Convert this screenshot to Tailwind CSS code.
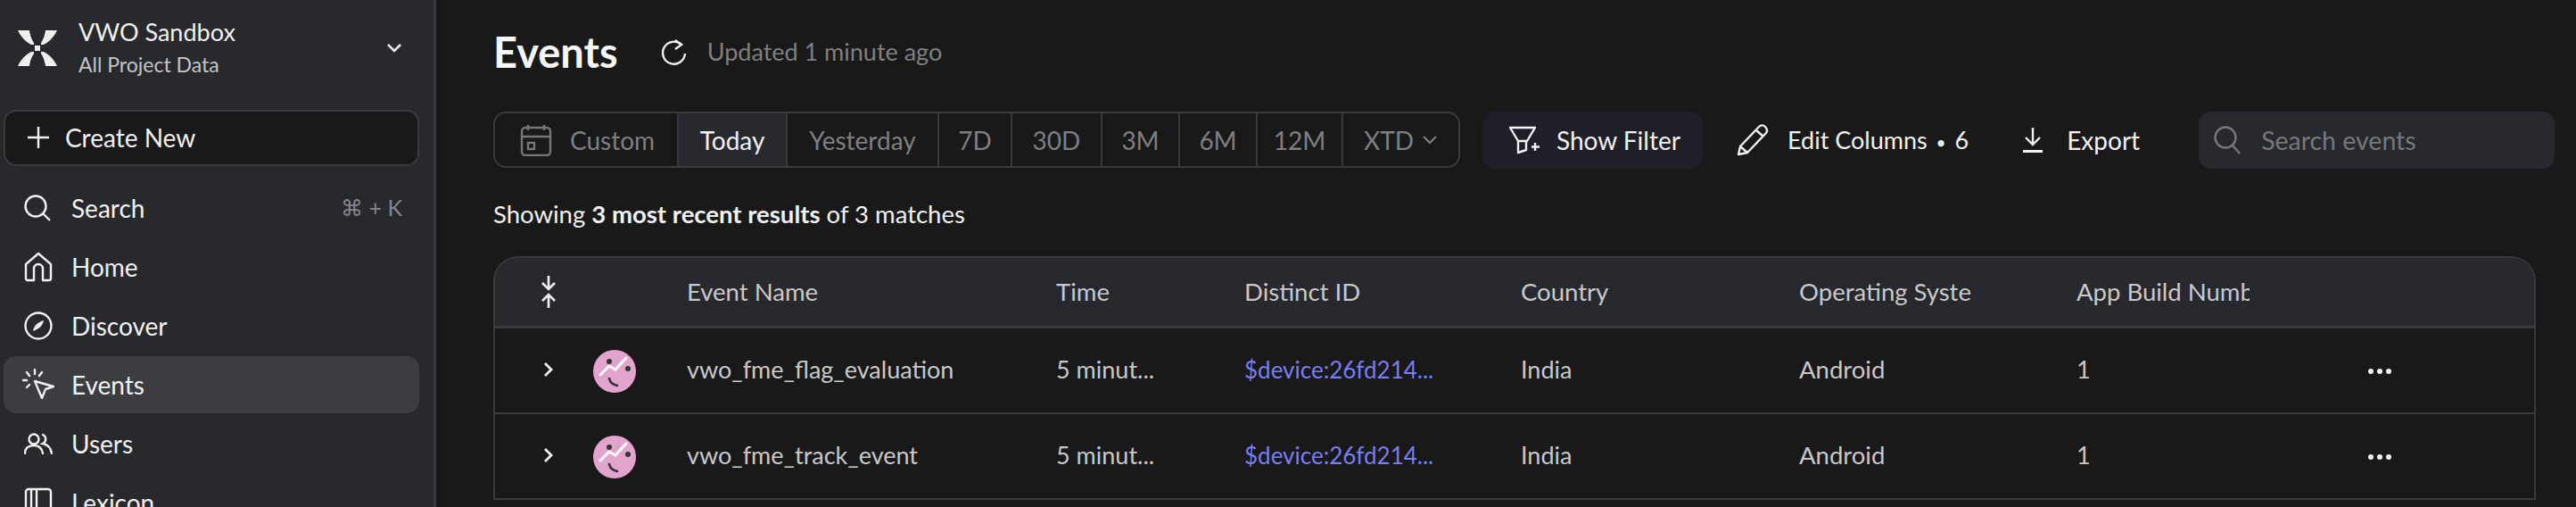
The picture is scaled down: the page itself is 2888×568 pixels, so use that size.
<!DOCTYPE html>
<html lang="en">
<head>
<meta charset="UTF-8">
<title>Events</title>
<script src="https://cdn.jsdelivr.net/npm/@tailwindcss/browser@4"></script>
</head>
<body class="bg-[#19191a] overflow-hidden">
<div class="flex h-[568px] w-[2888px] overflow-hidden font-['Lato',sans-serif] text-[28px] text-[#f2f2f2]">

  <!-- sidebar -->
  <aside class="w-[489px] shrink-0 bg-[#28292d] border-r-[3px] border-[#37383c] pl-[4px] pr-[16px]">
    <div class="flex items-center h-[123px] pl-[16px] pr-[19px] pb-[15px]">
      <svg class="w-[44px] h-[42px] shrink-0" viewBox="0 0 44 42" fill="#f0f0f0">
        <path d="M0 1H13C14 8 16 12 18 15V17H15C9 14 3 8 0 1Z"/><path d="M44 1H31C30 8 28 12 26 15V17H29C35 14 41 8 44 1Z"/>
        <path d="M0 41H13C14 34 16 30 18 27V25H15C9 28 3 34 0 41Z"/><path d="M44 41H31C30 34 28 30 26 27V25H29C35 28 41 34 44 41Z"/>
        <rect x="19" y="18" width="6" height="6"/>
      </svg>
      <div class="ml-[24px] flex-1">
        <div class="text-[27px] leading-[36px]">VWO Sandbox</div>
        <div class="text-[23px] leading-[37px] text-[#c4c4c6]">All Project Data</div>
      </div>
      <svg class="w-[18px] h-[12px]" viewBox="0 0 18 12" fill="none" stroke="#f2f2f2" stroke-width="2.6"><path d="M2 2l7 7 7-7"/></svg>
    </div>
    <div class="flex items-center h-[63px] rounded-[14px] bg-[#19191a] border-[2px] border-[#3a3b3f] pl-[25px] pb-[2px]">
      <svg class="w-[24px] h-[24px]" viewBox="0 0 24 24" stroke="#f2f2f2" stroke-width="2.4"><path d="M12 0v24M0 12h24"/></svg>
      <span class="ml-[18px]">Create New</span>
    </div>
    <nav class="mt-[14px]">
      <div class="flex items-center h-[66px] pl-[23px] pr-[19px]">
        <svg class="w-[30px] h-[30px] shrink-0" viewBox="0 0 30 30" fill="none" stroke="#f2f2f2" stroke-width="2.4"><circle cx="13" cy="13" r="11.5"/><path d="M21 21l8 8"/></svg>
        <span class="ml-[23px] flex-1">Search</span>
        <span class="text-[#858587] text-[25px]">⌘ + K</span>
      </div>
      <div class="flex items-center h-[66px] pl-[23px]">
        <svg class="w-[32px] h-[34px] shrink-0" viewBox="0 0 32 34" fill="none" stroke="#f2f2f2" stroke-width="2.4" stroke-linejoin="round"><path d="M2 14L16 2l14 12v16a2 2 0 0 1-2 2h-7V19a5 5 0 0 0-10 0v13H4a2 2 0 0 1-2-2Z"/></svg>
        <span class="ml-[21px]">Home</span>
      </div>
      <div class="flex items-center h-[66px] pl-[23px]">
        <svg class="w-[32px] h-[32px] shrink-0" viewBox="0 0 32 32" fill="none" stroke="#f2f2f2" stroke-width="2.4"><circle cx="16" cy="16" r="14.5"/><path d="M22 10c-1 5-4 9-12 12 1-6 5-10 12-12Z" fill="#f2f2f2" stroke="none"/></svg>
        <span class="ml-[21px]">Discover</span>
      </div>
      <div class="flex items-center h-[64px] my-[1px] pl-[21px] bg-[#3c3d40] rounded-[14px]">
        <svg class="w-[36px] h-[36px] shrink-0" viewBox="0 0 36 36" fill="none" stroke="#f2f2f2" stroke-width="2.4" stroke-linecap="round" stroke-linejoin="round"><path d="M14 14l21 6-9 3-4 10Z"/><path d="M14 1v5M5 4l3 4M22 4l-3 4M1 13h4M5 21l3-3"/></svg>
        <span class="ml-[19px]">Events</span>
      </div>
      <div class="flex items-center h-[66px] pl-[23px]">
        <svg class="w-[32px] h-[24px] shrink-0" viewBox="0 0 32 24" fill="none" stroke="#f2f2f2" stroke-width="2.4" stroke-linecap="round"><circle cx="11" cy="7" r="5.5"/><path d="M1 23c0-6 4-9 10-9s9 3 10 9M21 2a5.5 5.5 0 0 1 0 10c5 1 9 5 10 11"/></svg>
        <span class="ml-[21px]">Users</span>
      </div>
      <div class="flex items-center h-[66px] pl-[23px]">
        <svg class="w-[32px] h-[34px] shrink-0" viewBox="0 0 32 34" fill="none" stroke="#f2f2f2" stroke-width="2.4"><rect x="2" y="2" width="28" height="30" rx="3"/><path d="M8 2v30M14 2v30"/></svg>
        <span class="ml-[21px]">Lexicon</span>
      </div>
    </nav>
  </aside>

  <!-- main -->
  <main class="flex-1 min-w-0 pl-[64px]">
    <div class="flex items-center h-[125px] pb-[8px]">
      <h1 class="text-[47px] font-bold text-[#f7f7f7]">Events</h1>
      <svg class="ml-[49px] w-[28px] h-[30px]" viewBox="0 0 28 30" fill="none" stroke="#f2f2f2" stroke-width="2.4"><path d="M22 6a12.5 12.5 0 1 0 4 10"/><path d="M15 1l7 5-7 5"/></svg>
      <span class="ml-[23px] text-[27px] text-[#7f7f81]">Updated 1 minute ago</span>
    </div>

    <div class="flex items-start h-[64px]">
      <div class="flex h-[63px] w-[1084px] rounded-[14px] border-[2px] border-[#3a3a3c] text-[#7f7f81]">
        <div class="w-[206px] flex items-center pl-[28px] border-r-[2px] border-[#3a3a3c]">
          <svg class="w-[36px] h-[36px] shrink-0" viewBox="0 0 36 36" fill="none" stroke="#77777a" stroke-width="2.4"><rect x="2" y="4" width="32" height="31" rx="4"/><path d="M2 14h32M9 1v6M27 1v6"/><rect x="9" y="21" width="7" height="7"/></svg>
          <span class="ml-[20px]">Custom</span>
        </div>
        <div class="w-[122px] flex items-center justify-center bg-[#28292e] text-[#f2f2f2] border-r-[2px] border-[#3a3a3c]">Today</div>
        <div class="w-[170px] flex items-center justify-center border-r-[2px] border-[#3a3a3c]">Yesterday</div>
        <div class="w-[82px] flex items-center justify-center border-r-[2px] border-[#3a3a3c]">7D</div>
        <div class="w-[101px] flex items-center justify-center border-r-[2px] border-[#3a3a3c]">30D</div>
        <div class="w-[87px] flex items-center justify-center border-r-[2px] border-[#3a3a3c]">3M</div>
        <div class="w-[87px] flex items-center justify-center border-r-[2px] border-[#3a3a3c]">6M</div>
        <div class="w-[96px] flex items-center justify-center border-r-[2px] border-[#3a3a3c]">12M</div>
        <div class="flex-1 flex items-center pl-[23px]">XTD
          <svg class="ml-[10px] w-[16px] h-[10px]" viewBox="0 0 16 10" fill="none" stroke="#7f7f81" stroke-width="2.2"><path d="M1 1l7 7 7-7"/></svg>
        </div>
      </div>
      <div class="ml-[25px] flex items-center h-[64px] w-[247px] rounded-[14px] bg-[#1e1f28] pl-[29px]">
        <svg class="w-[36px] h-[32px] shrink-0" viewBox="0 0 36 32" fill="none" stroke="#f2f2f2" stroke-width="2.4" stroke-linejoin="round"><path d="M2 2h28l-9 15H11Z"/><path d="M11 17v13l9-3V17M30 19v9M26 23.5h9"/></svg>
        <span class="ml-[18px]">Show Filter</span>
      </div>
      <div class="ml-[38px] flex items-center h-[64px]">
        <svg class="w-[36px] h-[36px] shrink-0" viewBox="0 0 36 36" fill="none" stroke="#f2f2f2" stroke-width="2.4" stroke-linejoin="round"><path d="M2 34l2-9L25 3c2-2 5-2 7 0s3 5 1 7L12 32ZM22 7l8 7M4 25l8 7"/></svg>
        <span class="ml-[21px] text-[27px]">Edit Columns <span class="text-[19px] mx-[3px]">•</span> 6</span>
      </div>
      <div class="ml-[61px] flex items-center h-[64px]">
        <svg class="w-[22px] h-[28px] shrink-0" viewBox="0 0 22 28" fill="none" stroke="#f2f2f2" stroke-width="2.4"><path d="M11 0v19M3 11l8 8 8-8"/><path d="M0 26.5h22" stroke-width="3"/></svg>
        <span class="ml-[27px]">Export</span>
      </div>
      <div class="ml-[66px] flex items-center h-[64px] w-[399px] rounded-[14px] bg-[#28292e] pl-[17px]">
        <svg class="w-[30px] h-[32px] shrink-0" viewBox="0 0 30 32" fill="none" stroke="#77777a" stroke-width="2.4"><circle cx="13" cy="13" r="11.5"/><path d="M21 22l8 9"/></svg>
        <span class="ml-[23px] text-[28.5px] text-[#77777a]">Search events</span>
      </div>
    </div>

    <div class="h-[98px] flex items-center pt-[3px] text-[27.5px]">
      <span>Showing <b class="font-bold">3 most recent results</b> of 3 matches</span>
    </div>

    <!-- table -->
    <div class="w-[2290px] rounded-t-[28px] border-x-[2px] border-t-[2px] border-[#3a3a3c] text-[#c8c8ca] text-[27px]">
      <div class="flex items-center h-[79px] rounded-t-[26px] bg-[#28292e] border-b-[3px] border-[#3a3a3c] text-[27.5px]">
        <div class="w-[215px] pl-[51px]">
          <svg class="w-[18px] h-[36px]" viewBox="0 0 18 36" fill="none" stroke="#f2f2f2" stroke-width="2.6"><path d="M9 0v14M2 8l7 7 7-7M9 36V22M2 28l7-7 7 7"/></svg>
        </div>
        <div class="w-[414px]">Event Name</div>
        <div class="w-[211px]">Time</div>
        <div class="w-[310px]">Distinct ID</div>
        <div class="w-[312px]">Country</div>
        <div class="w-[311px]"><div class="w-[193px] overflow-hidden whitespace-nowrap">Operating System</div></div>
        <div><div class="w-[194px] overflow-hidden whitespace-nowrap">App Build Number</div></div>
      </div>

      <div class="flex items-center h-[96px] pb-[2px] border-b-[2px] border-[#3a3a3c]">
        <div class="w-[215px] flex items-center pl-[54px]">
          <svg class="w-[11px] h-[18px]" viewBox="0 0 11 18" fill="none" stroke="#f2f2f2" stroke-width="2.8"><path d="M2 2l7 7-7 7"/></svg>
          <svg class="ml-[45px] w-[48px] h-[48px] mt-[4px]" viewBox="0 0 48 48"><circle cx="24" cy="24" r="24" fill="#e2a3cc"/><circle cx="18" cy="13" r="3" fill="#333"/><circle cx="39" cy="21" r="3" fill="#333"/><path d="M8 28l10-10 7 4 12-13" fill="none" stroke="#fff" stroke-width="3" stroke-linecap="round"/><path d="M18 32c1 5 4 7 9 8" fill="none" stroke="#333" stroke-width="2.6" stroke-linecap="round"/></svg>
        </div>
        <div class="w-[414px]">vwo_fme_flag_evaluation</div>
        <div class="w-[211px]">5 minut...</div>
        <div class="w-[310px] text-[26px] text-[#7a7df0]">$device:26fd214...</div>
        <div class="w-[312px]">India</div>
        <div class="w-[311px] text-[27.5px]">Android</div>
        <div class="w-[327px]">1</div>
        <svg class="w-[26px] h-[6px] mt-[3px]" viewBox="0 0 26 6" fill="#f2f2f2"><circle cx="3" cy="3" r="3"/><circle cx="13" cy="3" r="3"/><circle cx="23" cy="3" r="3"/></svg>
      </div>

      <div class="flex items-center h-[96px] pb-[2px] border-b-[2px] border-[#3a3a3c]">
        <div class="w-[215px] flex items-center pl-[54px]">
          <svg class="w-[11px] h-[18px]" viewBox="0 0 11 18" fill="none" stroke="#f2f2f2" stroke-width="2.8"><path d="M2 2l7 7-7 7"/></svg>
          <svg class="ml-[45px] w-[48px] h-[48px] mt-[4px]" viewBox="0 0 48 48"><circle cx="24" cy="24" r="24" fill="#e2a3cc"/><circle cx="18" cy="13" r="3" fill="#333"/><circle cx="39" cy="21" r="3" fill="#333"/><path d="M8 28l10-10 7 4 12-13" fill="none" stroke="#fff" stroke-width="3" stroke-linecap="round"/><path d="M18 32c1 5 4 7 9 8" fill="none" stroke="#333" stroke-width="2.6" stroke-linecap="round"/></svg>
        </div>
        <div class="w-[414px]">vwo_fme_track_event</div>
        <div class="w-[211px]">5 minut...</div>
        <div class="w-[310px] text-[26px] text-[#7a7df0]">$device:26fd214...</div>
        <div class="w-[312px]">India</div>
        <div class="w-[311px] text-[27.5px]">Android</div>
        <div class="w-[327px]">1</div>
        <svg class="w-[26px] h-[6px] mt-[3px]" viewBox="0 0 26 6" fill="#f2f2f2"><circle cx="3" cy="3" r="3"/><circle cx="13" cy="3" r="3"/><circle cx="23" cy="3" r="3"/></svg>
      </div>
    </div>
  </main>
</div>
</body>
</html>
